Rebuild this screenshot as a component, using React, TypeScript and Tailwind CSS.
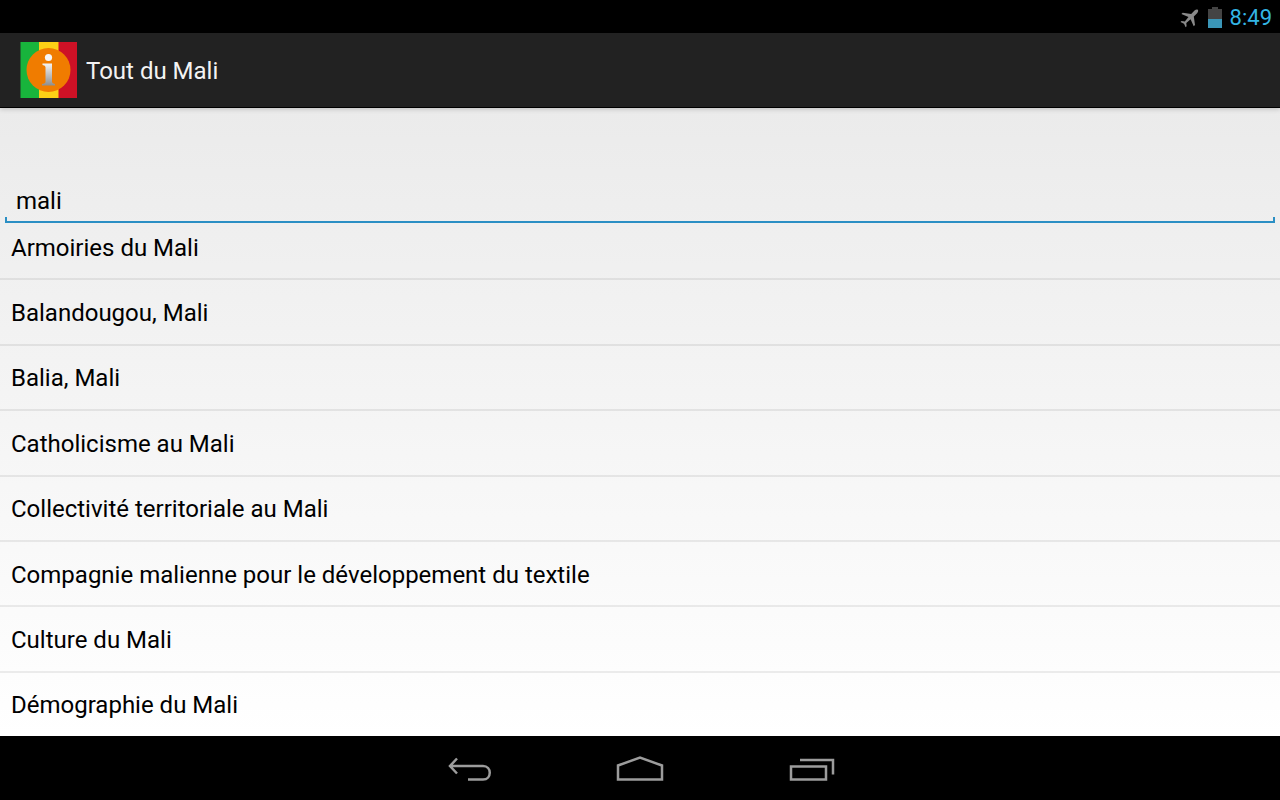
import { useState } from 'react';

const ARTICLES = [
  'Armoiries du Mali',
  'Balandougou, Mali',
  'Balia, Mali',
  'Catholicisme au Mali',
  'Collectivité territoriale au Mali',
  'Compagnie malienne pour le développement du textile',
  'Culture du Mali',
  'Démographie du Mali',
];

function StatusBar() {
  return (
    <div className="h-[33px] shrink-0 bg-black flex items-center justify-end gap-2 pt-[2px] pr-2 text-[#33b5e5]">
      <svg width="20" height="20" viewBox="0 0 20 20" fill="#8a8a8a" aria-hidden="true">
        <path d="M17.8 1.800c-.8-.8-2.200-.2-3.300.8l-3.300 3.300-8.500-1.200-1.300 1.300 7.100 3.100-3.700 4.300-3.300-.3-1 1 3.500 1.600 1.600 3.500 1-1-.3-3.300 4.300-3.700 3.100 7.100 1.300-1.300-1.200-8.500 3.300-3.300c1-1.100 1.500-2.600.7-3.400z" />
      </svg>
      <svg width="14" height="21" viewBox="0 0 14 21" aria-hidden="true">
        <path d="M0 2h4V0h6v2h4v10H0z" fill="#444" />
        <path d="M0 12h14v9H0z" fill="#3a96b8" />
      </svg>
      <span className="font-[Roboto] text-[22px] leading-8">8:49</span>
    </div>
  );
}

function AppIcon() {
  return (
    <svg width="58" height="58" viewBox="0 0 58 58" aria-hidden="true">
      <defs>
        <linearGradient id="info" x1="0" y1="0" x2="0" y2="1">
          <stop offset="0" stopColor="#f4f4f4" />
          <stop offset="1" stopColor="#8f8f8f" />
        </linearGradient>
      </defs>
      <path d="M.5 1H20v56H.5z" fill="#18b43c" />
      <path d="M19 1h20v56H19z" fill="#fcd116" />
      <path d="M38.500 1H57v56H38.500z" fill="#ce1126" />
      <circle cx="28.500" cy="29" r="22" fill="#f07c00" />
      <circle cx="28.500" cy="16.500" r="3.600" fill="#f6f6f6" />
      <path d="M22.500 22.500H32V41q0 1.500 3 2v1.500H22V43q3.500-.5 3.500-2V26q0-1.500-3-2z" fill="url(#info)" />
    </svg>
  );
}

function NavBar() {
  return (
    <nav className="h-16 shrink-0 bg-black flex items-center justify-center gap-[86px] pt-[2px] text-[#9c9c9c]">
      <button type="button" aria-label="Back">
        <svg width="86" height="36" viewBox="0 0 86 36" fill="none" stroke="currentColor" strokeWidth="2.500">
          <path d="M32 7.500l-7 7.500 7 7.500M25 15h33c9 0 9 13.500 0 13.500H43" />
        </svg>
      </button>
      <button type="button" aria-label="Home">
        <svg width="86" height="36" viewBox="0 0 86 36" fill="none" stroke="currentColor" strokeWidth="2.500">
          <path d="M21 28.500V14.500L43 6.500l22 8v14z" />
        </svg>
      </button>
      <button type="button" aria-label="Recent apps">
        <svg width="86" height="36" viewBox="0 0 86 36" fill="none" stroke="currentColor" strokeWidth="2.500">
          <path d="M22 15.500h35v13H22zM31 9h33v14.500" />
        </svg>
      </button>
    </nav>
  );
}

export default function App() {
  const [query, setQuery] = useState('mali');

  return (
    <div className="h-screen flex flex-col overflow-hidden font-[Roboto,sans-serif] text-black">
      <StatusBar />

      <header className="h-[75px] shrink-0 flex items-center gap-2 px-5 bg-[#222] border-b border-black shadow-[0_1px_5px_rgba(0,0,0,0.2)] z-10">
        <AppIcon />
        <h1 className="pt-[2px] text-2xl text-[#f3f3f3]">Tout du Mali</h1>
      </header>

      <main className="flex-1 min-h-0 flex flex-col overflow-hidden bg-linear-to-b from-[#ebebeb] to-white">
        {/* Search field, with the small upturned ends of the Holo underline */}
        <div className="shrink-0 pt-[77px] px-[5px]">
          <input
            type="text"
            aria-label="Rechercher"
            value={query}
            onChange={(e) => setQuery(e.target.value)}
            className="block w-full h-8 px-[11px] text-2xl outline-none"
          />
          <div className="h-[6px] border-2 border-t-0 border-[#2b8fc4]" />
        </div>

        {/* Results */}
        <ul className="flex-1 grid auto-rows-fr -mt-2 -mb-[2px]">
          {ARTICLES.map((title) => (
            <li key={title} className="border-b-2 border-black/7">
              <a href="#" className="h-full flex items-center px-[11px] pt-[2px] text-2xl">
                {title}
              </a>
            </li>
          ))}
        </ul>
      </main>

      <NavBar />
    </div>
  );
}
